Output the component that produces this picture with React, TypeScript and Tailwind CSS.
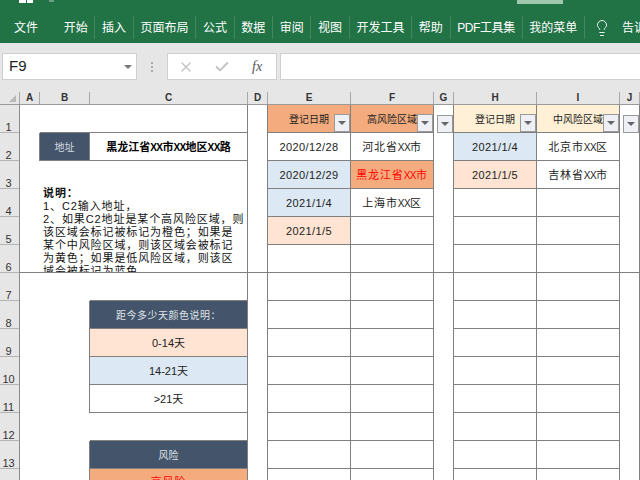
import React from "react";
import { X, Check, Lightbulb } from "lucide-react";

const TABS = ["开始", "插入", "页面布局", "公式", "数据", "审阅", "视图", "开发工具", "帮助", "PDF工具集", "我的菜单"];

const COLS = [
  { name: "A", w: "w-[20px]" },
  { name: "B", w: "w-[50px]" },
  { name: "C", w: "w-[158px]" },
  { name: "D", w: "w-[20px]" },
  { name: "E", w: "w-[83px]" },
  { name: "F", w: "w-[83px]" },
  { name: "G", w: "w-[20px]" },
  { name: "H", w: "w-[83px]" },
  { name: "I", w: "w-[83px]" },
  { name: "J", w: "w-[20px]" },
];

const ROWS = [1, 2, 3, 4, 5, 6, 7, 8, 9, 10, 11, 12, 13, 14];

const NOTES = [
  "1、C2输入地址，",
  "2、如果C2地址是某个高风险区域，则",
  "该区域会标记被标记为橙色；如果是",
  "某个中风险区域，则该区域会被标记",
  "为黄色；如果是低风险区域，则该区",
  "域会被标记为蓝色。",
];

type CellData = { text?: string; bg?: string; color?: string };

const COL_E: CellData[] = [
  { text: "2020/12/28" },
  { text: "2020/12/29", bg: "bg-[#dce9f5]" },
  { text: "2021/1/4", bg: "bg-[#dce9f5]" },
  { text: "2021/1/5", bg: "bg-[#ffe4d4]" },
];
const COL_F: CellData[] = [
  { text: "河北省XX市" },
  { text: "黑龙江省XX市", bg: "bg-[#f4ac7e]", color: "text-[#ff0000]" },
  { text: "上海市XX区" },
];
const COL_H: CellData[] = [
  { text: "2021/1/4", bg: "bg-[#dce9f5]" },
  { text: "2021/1/5", bg: "bg-[#ffe4d4]" },
];
const COL_I: CellData[] = [{ text: "北京市XX区" }, { text: "吉林省XX市" }];

// the sheet's XX runs are half-width, so they get a tighter setting than the CJK around them
function Address({ text }: { text: string }) {
  const parts = text.split("XX");
  return (
    <>
      {parts.map((p, i) => (
        <React.Fragment key={i}>
          {i > 0 && <span className="text-[10px] tracking-[-0.6px]">XX</span>}
          {p}
        </React.Fragment>
      ))}
    </>
  );
}

function FilterButton() {
  return (
    <span className="absolute right-0 bottom-0 flex h-[18px] w-[16px] items-center justify-center border border-[#9a9a9a] bg-[#eef0f6]">
      <svg width="8" height="4" viewBox="0 0 8 4">
        <polygon points="0,0 8,0 4,4" fill="#666" />
      </svg>
    </span>
  );
}

function HeadCell({ label, bg }: { label?: string; bg: string }) {
  return (
    <div className={`relative flex h-[28px] shrink-0 items-center justify-center overflow-hidden border-r border-b border-[#808080] pt-[1px] text-[10px] text-[#222] ${bg}`}>
      <span className="whitespace-nowrap">{label}</span>
      <FilterButton />
    </div>
  );
}

function DataColumn({ title, head, cells, w, dates }: { title: string; head: string; cells: CellData[]; w: string; dates?: boolean }) {
  const filled = ROWS.slice(1).map((_, i) => cells[i] ?? {});
  return (
    <div className={`flex shrink-0 flex-col ${w}`}>
      <HeadCell label={title} bg={head} />
      {filled.map((c, i) => (
        <div
          key={i}
          className={`flex h-[28px] shrink-0 items-center justify-center overflow-hidden whitespace-nowrap border-r border-b border-[#808080] pt-[1px] text-[11px] ${dates ? "tracking-[0.4px]" : "tracking-[0.9px]"} ${c.bg ?? "bg-white"} ${c.color ?? "text-[#222]"}`}
        >
          {c.text && <Address text={c.text} />}
        </div>
      ))}
    </div>
  );
}

function GapColumn({ filter }: { filter?: boolean }) {
  return (
    <div className="flex w-[20px] shrink-0 flex-col">
      <div className="relative h-[28px] shrink-0 border-r border-[#808080] bg-white">{filter && <FilterButton />}</div>
      <div className="h-[140px] shrink-0 border-r border-b border-[#808080] bg-white" />
      <div className="flex-1 border-r border-[#808080] bg-white" />
    </div>
  );
}

function LeftBlock() {
  return (
    <div className="grid w-[228px] shrink-0 grid-cols-[20px_50px_158px] grid-rows-[repeat(14,28px)] bg-white">
      <div className="col-[1] row-[1]" />
      <div className="col-[2/4] row-[1] border-r border-b border-[#808080]" />
      <div className="col-[1] row-[2] border-r border-[#808080]" />
      <div className="col-[2] row-[2] flex items-center justify-center border-r border-b border-[#808080] bg-[#44546a] pt-[2px] text-[10px] text-[#d5dae2]">
        地址
      </div>
      <div className="col-[3] row-[2] flex items-center justify-center whitespace-nowrap border-r border-b border-[#808080] pt-[1px] text-[11px] font-bold text-black">
        <Address text="黑龙江省XX市XX地区XX路" />
      </div>
      <div className="col-[1] row-[3/7] border-b border-[#808080]" />
      <div className="col-[2/4] row-[3/7] overflow-hidden whitespace-nowrap border-r border-b border-[#808080] pt-[26px] pl-[3px] text-[11px] leading-[13px] tracking-[0.9px] text-[#111]">
        <p className="font-bold">说明：</p>
        {NOTES.map((n) => (
          <p key={n}>{n}</p>
        ))}
      </div>

      <div className="col-[1/3] row-[7] " />
      <div className="col-[3] row-[7] border-r border-b border-[#808080]" />
      <div className="col-[1/3] row-[8/12] border-r border-[#808080]" />
      <div className="col-[3] row-[8] flex items-center justify-center border-r border-b border-[#808080] bg-[#44546a] pt-[2px] text-[10px] tracking-[0.5px] text-[#dfe3e8]">
        距今多少天颜色说明：
      </div>
      <div className="col-[3] row-[9] flex items-center justify-center border-r border-b border-[#808080] bg-[#ffe4d4] pt-[1px] text-[11px] text-[#222]">
        0-14天
      </div>
      <div className="col-[3] row-[10] flex items-center justify-center border-r border-b border-[#808080] bg-[#dce9f5] pt-[1px] text-[11px] text-[#222]">
        14-21天
      </div>
      <div className="col-[3] row-[11] flex items-center justify-center border-r border-b border-[#808080] pt-[1px] text-[11px] text-[#222]">
        &gt;21天
      </div>
      <div className="col-[1/3] row-[12]" />
      <div className="col-[3] row-[12] border-r border-b border-[#808080]" />
      <div className="col-[1/3] row-[13/15] border-r border-[#808080]" />
      <div className="col-[3] row-[13] flex items-center justify-center border-r border-b border-[#808080] bg-[#44546a] pt-[2px] text-[10px] text-[#dfe3e8]">
        风险
      </div>
      <div className="col-[3] row-[14] flex items-center justify-center border-r border-b border-[#808080] bg-[#f4ac7e] text-[11px] tracking-[0.9px] text-[#ff0000]">
        高风险
      </div>
    </div>
  );
}

export default function App() {
  return (
    <div className="flex h-[480px] w-[640px] flex-col overflow-hidden bg-[#e6e6e6] font-['Liberation_Sans','Noto_Sans_CJK_SC',sans-serif]">
      {/* Ribbon tabs */}
      <div className="flex h-[43px] shrink-0 flex-col bg-[#217346]">
        <div className="flex h-[4px] shrink-0">
          <div className="ml-[19px] flex h-[3px] w-[14px] justify-center bg-white">
            <div className="h-[3px] w-[1px] bg-[#217346]" />
          </div>
          <div className="ml-[16px] h-[2px] w-[5px] bg-[#6fa084]" />
          <div className="ml-[463px] h-[4px] w-[46px] bg-[#9fc8ae]" />
        </div>
        <div className="mt-[12px] flex h-[23px] items-center whitespace-nowrap text-[12px] text-white">
          <span className="mr-[19px] ml-[14px]">文件</span>
          {TABS.map((t, i) => (
            <span
              key={t}
              className={`flex h-[23px] items-center border-r border-white/15 px-[6.7px] ${i === 9 ? "tracking-[-0.4px]" : ""}`}
            >
              {t}
            </span>
          ))}
          <Lightbulb className="mr-[11px] ml-[8px] h-[18px] w-[18px] shrink-0 text-white" strokeWidth={1.2} />
          <span>告诉我</span>
        </div>
      </div>

      {/* Name box and formula bar */}
      <div className="flex h-[49px] shrink-0 items-start pt-[10px] pb-[12px]">
        <div className="ml-[2px] flex h-[27px] w-[135px] items-center justify-between border border-[#cfcfcf] bg-white pr-[4px] pl-[6px] text-[15px] text-[#222]">
          F9
          <svg width="8" height="4" viewBox="0 0 8 4">
            <polygon points="0,0 8,0 4,4" fill="#777" />
          </svg>
        </div>
        <div className="flex h-[27px] w-[30px] flex-col items-center justify-center gap-[2px]">
          <i className="h-[2px] w-[2px] bg-[#aaa]" />
          <i className="h-[2px] w-[2px] bg-[#aaa]" />
          <i className="h-[2px] w-[2px] bg-[#aaa]" />
        </div>
        <div className="flex h-[27px] w-[110px] items-center border border-[#cfcfcf] bg-white">
          <X className="ml-[10px] h-[16px] w-[16px] text-[#c4c4c4]" strokeWidth={2} />
          <Check className="ml-[20px] h-[16px] w-[16px] text-[#c4c4c4]" strokeWidth={3} />
          <span className="ml-[22px] font-['Liberation_Serif',serif] text-[14px] text-[#555] italic">fx</span>
        </div>
        <div className="ml-[3px] h-[27px] flex-1 border-y border-l border-[#cfcfcf] bg-white" />
      </div>

      {/* Column letters */}
      <div className="flex h-[13px] shrink-0 border-b border-[#9a9a9a]">
        <div className="flex w-[20px] shrink-0 items-end justify-end border-r border-[#a8a8a8] pr-[3px] pb-[2px]">
          <svg width="7" height="7" viewBox="0 0 7 7">
            <polygon points="7,0 7,7 0,7" fill="#b8b8b8" />
          </svg>
        </div>
        {COLS.map((c) => (
          <div key={c.name} className={`flex shrink-0 items-center justify-center border-r border-[#a8a8a8] text-[10px] leading-none font-bold text-[#333] ${c.w}`}>
            {c.name}
          </div>
        ))}
      </div>

      {/* Sheet */}
      <div className="flex min-h-0 flex-1 overflow-hidden">
        <div className="flex w-[20px] shrink-0 flex-col border-r border-[#8c8c8c]">
          {ROWS.map((r) => (
            <div key={r} className="flex h-[28px] shrink-0 items-end justify-center border-b border-[#b4b4b4] pr-[2px] text-[11px] leading-[10px] text-[#333]">
              {r}
            </div>
          ))}
        </div>
        <LeftBlock />
        <div className="flex w-[20px] shrink-0 flex-col bg-white">
          <div className="h-[168px] shrink-0 border-r border-b border-[#808080]" />
          <div className="flex-1 border-r border-[#808080]" />
        </div>
        <DataColumn title="登记日期" head="bg-[#f4ac7e]" cells={COL_E} w="w-[83px]" dates />
        <DataColumn title="高风险区域" head="bg-[#f4ac7e]" cells={COL_F} w="w-[83px]" />
        <GapColumn filter />
        <DataColumn title="登记日期" head="bg-[#fff0d6]" cells={COL_H} w="w-[83px]" dates />
        <DataColumn title="中风险区域" head="bg-[#fff0d6]" cells={COL_I} w="w-[83px]" />
        <GapColumn filter />
      </div>
    </div>
  );
}
